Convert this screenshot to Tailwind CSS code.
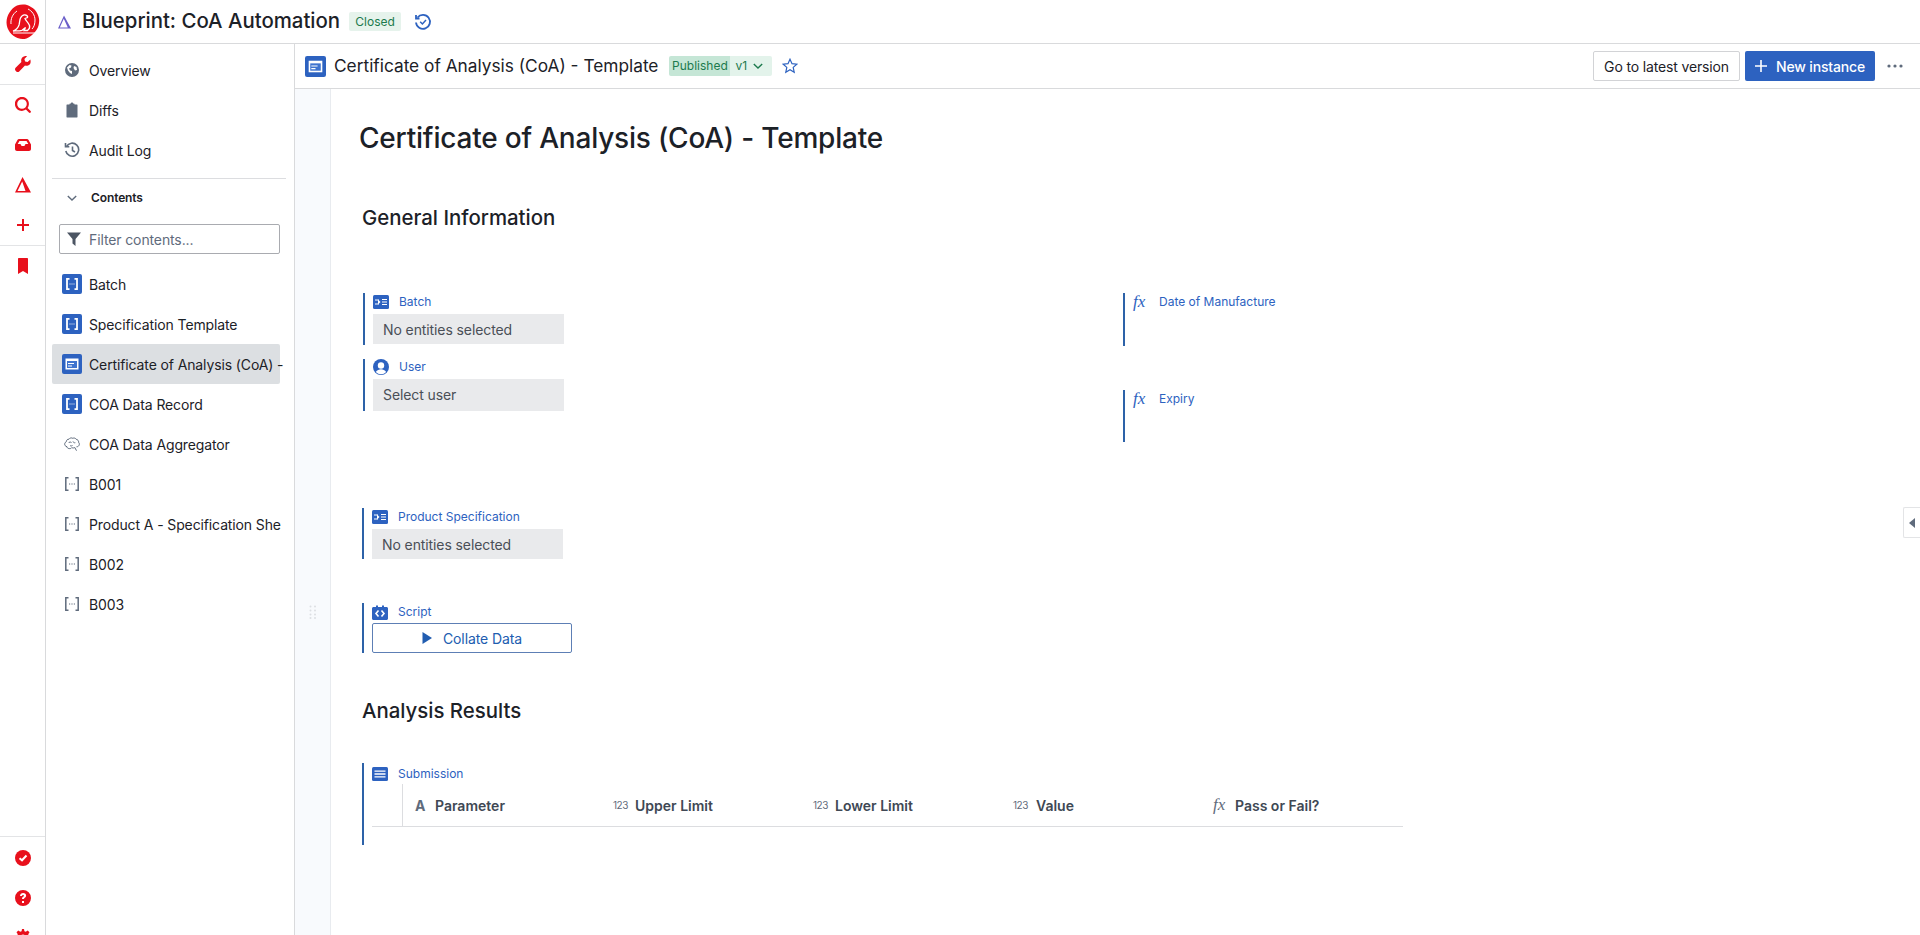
<!DOCTYPE html>
<html lang="en">
<head>
    <meta charset="UTF-8">
    <title>Blueprint: CoA Automation</title>
    <script src="https://cdn.jsdelivr.net/npm/@tailwindcss/browser@4"></script>
</head>
<body class="h-[935px] overflow-hidden bg-white text-[#1c2127] font-['Inter',sans-serif]">
<div class="flex h-[935px]">
    <!-- icon rail -->
    <nav class="w-[46px] shrink-0 flex flex-col border-r border-[#d9dadc] text-[#e8101c]">
        <div class="h-[44px] shrink-0 flex items-center justify-center border-b border-[#d9dadc]">
            <svg width="34" height="36" viewBox="0 0 34 36"><path d="M17 .5c3 0 5 .5 8 2.500 3 1.800 5 3.500 6.500 7 1.500 3.500 2 6 1.500 9-.5 3.500-1.500 6-4 9-2.500 3-5 5-8.500 6.500-3 .8-5.500.8-9-.5-3-1-5.500-3-7.500-5.500C2 25.500.5 22.500.5 18.500c0-4 1-7 3-10C5.500 5 8 3 11 1.500 13 .8 15 .5 17 .5z" fill="#e8101c"/><path d="M22 5c4 2 7 6 7 11 0 4-1 7-3 9M5 20c-.5-5 1.500-10 6-13" fill="none" stroke="#fff" stroke-width="1"/><path d="M7 27c3-1 5-3 6-6 .8-3 .5-5 1.500-7 1-2 3-3.500 5-3 1.500.3 2.500 1.500 2 2.500l-2.500 1c1 2.500 3.500 4 4.500 7 .5 2-.5 4-2 5H18l1.500-3-3.500 2.800c-3 .8-6 .5-9 .7z" fill="none" stroke="#fff" stroke-width="1.300"/><path d="M7 29h22" stroke="#fff" stroke-width="1"/></svg>
        </div>
        <div class="h-[41px] shrink-0 flex items-center justify-center border-b border-[#e3e4e6]">
            <svg width="16" height="16" viewBox="0 0 16 16" fill="currentColor"><path d="M15.300 3.400l-2.700 2.700-2.500-.7-.7-2.500L12 .2C10.500-.3 8.700.1 7.500 1.300 6.200 2.600 5.900 4.400 6.400 6L.6 11.800c-.8.800-.8 2.100 0 2.900l.7.700c.8.800 2.100.8 2.900 0L10 9.600c1.600.5 3.400.1 4.700-1.100 1.200-1.300 1.100-3.500.6-5.100z"/></svg>
        </div>
        <div class="h-[161px] shrink-0 flex flex-col items-center border-b border-[#e3e4e6]">
            <div class="h-[40px] w-full flex items-center justify-center">
                <svg width="16" height="16" viewBox="0 0 16 16" fill="currentColor"><path d="M15.600 13.900l-3-3A7 7 0 1 0 10.900 12.600l3 3c.5.500 1.200.500 1.700 0s.5-1.200 0-1.700zM7 11.800A4.800 4.800 0 1 1 7 2.200a4.800 4.800 0 0 1 0 9.600z"/></svg>
            </div>
            <div class="h-[40px] w-full flex items-center justify-center">
                <svg width="16" height="16" viewBox="0 0 16 16" fill="currentColor"><path d="M4 2h8c.6 0 1.100.3 1.400.8L16 7.500V12c0 1.100-.9 2-2 2H2c-1.100 0-2-.9-2-2V7.500l2.600-4.700C2.900 2.300 3.400 2 4 2zm.5 2L2.700 7H5c.4 0 .7.200.9.500L6.500 9h3l.6-1.500c.2-.3.500-.5.900-.5h2.300l-1.800-3z"/></svg>
            </div>
            <div class="h-[40px] w-full flex items-center justify-center">
                <svg width="16" height="16" viewBox="0 0 16 16" fill="currentColor" fill-rule="evenodd"><path d="M7.500 0L16 15.500H0zM7.200 4.500L2.500 14h8z"/></svg>
            </div>
            <div class="h-[40px] w-full flex items-center justify-center">
                <svg width="12" height="12" viewBox="0 0 12 12" fill="currentColor"><path d="M5 0h2v5h5v2H7v5H5V7H0V5h5z"/></svg>
            </div>
        </div>
        <div class="h-[40px] shrink-0 flex items-center justify-center">
            <svg width="10" height="16" viewBox="0 0 10 16" fill="currentColor"><path d="M1 0h8c.6 0 1 .4 1 1v15l-5-3-5 3V1c0-.6.4-1 1-1z"/></svg>
        </div>
        <div class="mt-auto h-[99px] shrink-0 flex flex-col items-center border-t border-[#e3e4e6] pt-[1px]">
            <div class="h-[40px] w-full shrink-0 flex items-center justify-center">
                <svg width="16" height="16" viewBox="0 0 16 16"><circle cx="8" cy="8" r="8" fill="currentColor"/><path d="M4.500 8.300l2.500 2 4.500-4.800" fill="none" stroke="#fff" stroke-width="2"/></svg>
            </div>
            <div class="h-[40px] w-full shrink-0 flex items-center justify-center">
                <svg width="16" height="16" viewBox="0 0 16 16" fill="currentColor"><path d="M8 0a8 8 0 1 0 0 16A8 8 0 0 0 8 0zm1 13H7v-2h2zm1.800-6.200c-.3.500-.8.900-1.300 1.200-.4.300-.5.500-.5 1H7c0-1.200.5-1.800 1.200-2.200.5-.3.800-.5.800-1 0-.5-.4-.8-1-.8s-1 .4-1.100 1H5c.1-1.800 1.400-3 3.100-3 1.900 0 3 1 3 2.600 0 .5-.1.800-.3 1.200z"/></svg>
            </div>
            <div class="mt-[11px] h-[16px] w-full shrink-0 flex items-start justify-center">
                <svg width="16" height="16" viewBox="0 0 16 16" fill="currentColor"><path d="M7 0h2l.4 2.200 1.400.6L12.700 1.500l1.800 1.800-1.300 1.900.6 1.400L16 7v2l-2.200.4-.6 1.400 1.300 1.900-1.800 1.800-1.900-1.300-1.400.6L9 16H7l-.4-2.200-1.400-.6-1.900 1.300-1.800-1.800 1.300-1.900-.6-1.400L0 9V7l2.200-.4.600-1.400-1.300-1.900 1.800-1.800 1.900 1.300 1.400-.6zM8 5.500a2.500 2.500 0 1 0 0 5 2.500 2.500 0 0 0 0-5z"/></svg>
            </div>
        </div>
    </nav>

    <div class="flex-1 min-w-0 flex flex-col">
        <!-- top bar -->
        <header class="h-[44px] shrink-0 flex items-center border-b border-[#d9dadc] pl-[11px]">
            <svg width="15" height="14" viewBox="0 0 15 14" fill="#6b5fc9" fill-rule="evenodd"><path d="M7 .5L14 13.500H1zM6.800 3.800L2.800 12.400h8z"/></svg>
            <span class="ml-[10px] text-[20.400px] font-medium leading-none">Blueprint: CoA Automation</span>
            <span class="ml-[9px] h-[19px] w-[52px] flex items-center justify-center rounded-[2px] bg-[#e6f3ec] text-[12px] text-[#1c7a4d]">Closed</span>
            <svg class="ml-[13px]" width="18" height="18" viewBox="0 0 18 18" fill="none" stroke="#2d62c0" stroke-width="1.800"><path d="M3.500 4.500A7 7 0 1 1 2 9.500"/><path d="M2 2v3.500h3.500"/><path d="M6.200 8.800l2.200 2.200 3.600-4" stroke-width="1.500"/></svg>
        </header>

        <div class="flex-1 min-h-0 flex">
            <!-- contents sidebar -->
            <aside class="w-[249px] shrink-0 border-r border-[#d9dadc] pl-[6px] text-[14px] tracking-[-0.12px]">
                <div class="pt-[6px]">
                    <div class="h-[40px] flex items-center pl-[12px]">
                        <svg width="16" height="16" viewBox="0 0 16 16" fill="#5f6b7c"><path d="M8 1a7 7 0 1 0 0 14A7 7 0 0 0 8 1zM3 5.500L5.500 3l2 .5-.5 2-2 1 1 2 2 .5v3L6 11 4 8.500zM10 4l2.500 1L13 8l-2 .5L9.500 6z"/></svg>
                        <span class="ml-[9px]">Overview</span>
                    </div>
                    <div class="h-[40px] flex items-center pl-[12px]">
                        <svg width="16" height="16" viewBox="0 0 16 16" fill="#5f6b7c"><path d="M5.500 2.500V2c0-.3.2-.5.500-.5h1V1c0-.3.2-.5.500-.5h1c.3 0 .5.2.500.500v.5h1c.3 0 .5.200.5.500v.5H13c.3 0 .5.200.5.500v12c0 .3-.2.500-.5.500H3c-.3 0-.5-.2-.5-.5V3c0-.3.2-.5.5-.5z"/></svg>
                        <span class="ml-[9px]">Diffs</span>
                    </div>
                    <div class="h-[40px] flex items-center pl-[12px]">
                        <svg width="16" height="16" viewBox="0 0 16 16" fill="none" stroke="#5f6b7c" stroke-width="1.600"><path d="M2.500 4.500A6.500 6.500 0 1 1 1.800 9"/><path d="M1.500 1v3.800h3.800"/><path d="M8.500 4.500V8.500l2.500 1.500"/></svg>
                        <span class="ml-[9px]">Audit Log</span>
                    </div>
                </div>
                <div class="mt-[8px] h-px w-[234px] bg-[#dcdde0]"></div>
                <div class="h-[38px] flex items-center pl-[15px]">
                    <svg width="10" height="10" viewBox="0 0 10 10" fill="none" stroke="#5f6b7c" stroke-width="1.400"><path d="M.8 3l4.200 4 4.200-4"/></svg>
                    <span class="ml-[14px] text-[12px] font-semibold">Contents</span>
                </div>
                <div class="ml-[7px] mt-[7px] w-[221px] h-[30px] flex items-center rounded-[2px] border border-[#a9abb0] pl-[7px]">
                    <svg width="14" height="14" viewBox="0 0 14 14" fill="#4c5563"><path d="M0 .5h14L8.500 7v7L5.500 11.500V7z"/></svg>
                    <span class="ml-[8px] text-[#5f6b7c]">Filter contents...</span>
                </div>
                <ul class="mt-[10px] w-[228px]">
                    <li class="h-[40px] flex items-center pl-[10px]">
                        <svg width="20" height="20" viewBox="0 0 20 20"><rect width="20" height="20" rx="2" fill="#2d62c0"/><path d="M7.500 4.800H5v10.400h2.500M12.500 4.800H15v10.400h-2.500" fill="none" stroke="#fff" stroke-width="1.800"/><path d="M7.500 10h1M9.500 10h1M11.500 10h1" stroke="#fff"/></svg>
                        <span class="ml-[7px] whitespace-nowrap">Batch</span>
                    </li>
                    <li class="h-[40px] flex items-center pl-[10px]">
                        <svg width="20" height="20" viewBox="0 0 20 20"><rect width="20" height="20" rx="2" fill="#2d62c0"/><path d="M7.500 4.800H5v10.400h2.500M12.500 4.800H15v10.400h-2.500" fill="none" stroke="#fff" stroke-width="1.800"/><path d="M7.500 10h1M9.500 10h1M11.500 10h1" stroke="#fff"/></svg>
                        <span class="ml-[7px] whitespace-nowrap">Specification Template</span>
                    </li>
                    <li class="h-[40px] flex items-center pl-[10px] rounded-[2px] bg-[#dcdfe2]">
                        <svg class="shrink-0" width="20" height="20" viewBox="0 0 20 20"><rect width="20" height="20" rx="2" fill="#2d62c0"/><rect x="3.500" y="4.500" width="13" height="11" fill="#fff"/><rect x="5" y="7" width="10" height="7" fill="#3f74cf"/><path d="M6 9.500h6M6 12h4" stroke="#fff"/></svg>
                        <span class="ml-[7px] whitespace-nowrap">Certificate of Analysis (CoA) -</span>
                    </li>
                    <li class="h-[40px] flex items-center pl-[10px]">
                        <svg width="20" height="20" viewBox="0 0 20 20"><rect width="20" height="20" rx="2" fill="#2d62c0"/><path d="M7.500 4.800H5v10.400h2.500M12.500 4.800H15v10.400h-2.500" fill="none" stroke="#fff" stroke-width="1.800"/><path d="M7.500 10h1M9.500 10h1M11.500 10h1" stroke="#fff"/></svg>
                        <span class="ml-[7px] whitespace-nowrap">COA Data Record</span>
                    </li>
                    <li class="h-[40px] flex items-center pl-[10px]">
                        <svg class="mx-[2px]" width="16" height="16" viewBox="0 0 16 16" fill="none" stroke="#5f6b7c"><path d="M5 12.500c-1.200 0-2-.8-2-1.800C1.500 10.400.5 9.200.7 7.800.9 6.800 1.500 6 2.300 5.700 2.300 4.300 3.500 3 5 3.200 5.600 2 7.500 1.500 8.800 2.300c1.200-.6 2.800-.2 3.400 1 1.500.2 2.600 1.500 2.400 3 .6.600.9 1.500.7 2.300-.3 1.400-1.500 2.300-2.800 2.200M5 12.500c1 .4 2.200 0 2.800-.9.900.5 2.100.5 3-.1M10.800 11.500l1.700 3.200M4.500 7c.7-1 2-1.200 3-.5M9 5.500c.3 1 1.300 1.500 2.300 1.200M6 9.500c.8.600 1.800.6 2.500 0"/></svg>
                        <span class="ml-[7px] whitespace-nowrap">COA Data Aggregator</span>
                    </li>
                    <li class="h-[40px] flex items-center pl-[10px]">
                        <svg class="mx-[2px]" width="16" height="16" viewBox="0 0 16 16" fill="none" stroke="#5f6b7c" stroke-width="1.500"><path d="M4.500 1.800H1.800v12.400h2.700M11.500 1.800h2.700v12.400h-2.700"/><path d="M5 8h1.200M7.400 8h1.200M9.800 8h1.200" stroke-width="1"/></svg>
                        <span class="ml-[7px] whitespace-nowrap">B001</span>
                    </li>
                    <li class="h-[40px] flex items-center pl-[10px]">
                        <svg class="mx-[2px] shrink-0" width="16" height="16" viewBox="0 0 16 16" fill="none" stroke="#5f6b7c" stroke-width="1.500"><path d="M4.500 1.800H1.800v12.400h2.700M11.500 1.800h2.700v12.400h-2.700"/><path d="M5 8h1.200M7.400 8h1.200M9.800 8h1.200" stroke-width="1"/></svg>
                        <span class="ml-[7px] whitespace-nowrap">Product A - Specification She</span>
                    </li>
                    <li class="h-[40px] flex items-center pl-[10px]">
                        <svg class="mx-[2px]" width="16" height="16" viewBox="0 0 16 16" fill="none" stroke="#5f6b7c" stroke-width="1.500"><path d="M4.500 1.800H1.800v12.400h2.700M11.500 1.800h2.700v12.400h-2.700"/><path d="M5 8h1.200M7.400 8h1.200M9.800 8h1.200" stroke-width="1"/></svg>
                        <span class="ml-[7px] whitespace-nowrap">B002</span>
                    </li>
                    <li class="h-[40px] flex items-center pl-[10px]">
                        <svg class="mx-[2px]" width="16" height="16" viewBox="0 0 16 16" fill="none" stroke="#5f6b7c" stroke-width="1.500"><path d="M4.500 1.800H1.800v12.400h2.700M11.500 1.800h2.700v12.400h-2.700"/><path d="M5 8h1.200M7.400 8h1.200M9.800 8h1.200" stroke-width="1"/></svg>
                        <span class="ml-[7px] whitespace-nowrap">B003</span>
                    </li>
                </ul>
            </aside>

            <main class="relative flex-1 min-w-0 flex flex-col">
                <!-- document header -->
                <div class="h-[45px] shrink-0 flex items-center border-b border-[#d9dadc] pl-[10px] pr-[17px]">
                    <svg width="21" height="21" viewBox="0 0 20 20"><rect width="20" height="20" rx="2" fill="#2d62c0"/><rect x="3.500" y="4.500" width="13" height="11" fill="#fff"/><rect x="5" y="7" width="10" height="7" fill="#3f74cf"/><path d="M6 9.500h6M6 12h4" stroke="#fff"/></svg>
                    <span class="ml-[8px] text-[17.300px]">Certificate of Analysis (CoA) - Template</span>
                    <div class="ml-[11px] h-[20px] flex items-center rounded-[2px] overflow-hidden text-[12px] text-[#1c7a4d]">
                        <span class="h-full w-[61px] flex items-center justify-center bg-[#c5e6d6]">Published</span>
                        <span class="h-full w-[42px] pl-[5px] flex items-center bg-[#e3f3eb]">v1
                            <svg class="ml-[6px]" width="10" height="10" viewBox="0 0 10 10" fill="none" stroke="#1c7a4d" stroke-width="1.400"><path d="M.8 3l4.200 4 4.200-4"/></svg>
                        </span>
                    </div>
                    <svg class="ml-[10px]" width="16" height="16" viewBox="0 0 16 16" fill="none" stroke="#2d62c0" stroke-width="1.200"><path d="M8 1.200l2 4.500 4.800.5-3.600 3.200 1 4.800L8 11.800l-4.200 2.400 1-4.800L1.200 6.200 6 5.700z"/></svg>
                    <div class="ml-auto flex items-center">
                        <button class="h-[30px] w-[147px] rounded-[2px] border border-[#d2d3d6] text-[14px] tracking-[-0.15px]">Go to latest version</button>
                        <button class="ml-[5px] h-[30px] w-[130px] flex items-center justify-center rounded-[2px] bg-[#2d62c0] text-[14px] font-medium tracking-[-0.15px] text-white">
                            <svg width="12" height="12" viewBox="0 0 12 12" fill="#fff"><path d="M5.200 0h1.600v5.200H12v1.600H6.800V12H5.200V6.800H0V5.200h5.200z"/></svg>
                            <span class="ml-[9px]">New instance</span>
                        </button>
                        <svg class="ml-[12px]" width="16" height="16" viewBox="0 0 16 16" fill="#5f6b7c"><circle cx="2" cy="8" r="1.600"/><circle cx="8" cy="8" r="1.600"/><circle cx="14" cy="8" r="1.600"/></svg>
                    </div>
                </div>

                <div class="flex-1 min-h-0 flex">
                    <!-- gutter -->
                    <div class="w-[36px] shrink-0 flex flex-col items-center bg-[#f8fafd] border-r border-[#e8ebef] pt-[516px]">
                        <svg width="8" height="14" viewBox="0 0 8 14" fill="#dcdfe3"><circle cx="1.500" cy="1.500" r="1"/><circle cx="6" cy="1.500" r="1"/><circle cx="1.500" cy="5.500" r="1"/><circle cx="6" cy="5.500" r="1"/><circle cx="1.500" cy="9.500" r="1"/><circle cx="6" cy="9.500" r="1"/><circle cx="1.500" cy="13" r="1"/><circle cx="6" cy="13" r="1"/></svg>
                    </div>

                    <!-- document body -->
                    <div class="flex-1 min-w-0 pl-[28px] pt-[32px]">
                        <h1 class="h-[35px] text-[28px] leading-[35px] font-medium tracking-[-0.2px]">Certificate of Analysis (CoA) - Template</h1>
                        <h2 class="ml-[3px] mt-[50px] h-[24px] text-[20.400px] leading-[24px] font-medium">General Information</h2>

                        <div class="ml-[4px] mt-[63px] flex h-[215px]">
                            <div class="w-[760px]">
                                <div class="mb-[14px] h-[52px] pl-[8px] border-l-[2px] border-[#2d62a8]">
                                    <div class="h-[21px] pb-[4px] flex items-center text-[12px] text-[#2d62c0]">
                                        <svg width="16" height="14" viewBox="0 0 16 14"><rect width="16" height="14" rx="1.500" fill="#2d62c0"/><path d="M2 5h4M2 9h4M9 4.500h5M9 7h5M9 9.500h5" stroke="#fff" stroke-width="1.200"/><path d="M5 4.500L7.500 7 5 9.500z" fill="#fff"/></svg>
                                        <span class="ml-[10px]">Batch</span>
                                    </div>
                                    <div class="h-[30px] w-[191px] pl-[10px] flex items-center bg-[#e9eaec] text-[14px] tracking-[-0.1px] text-[#4a4f57]">No entities selected</div>
                                </div>
                                <div class="h-[52px] pl-[8px] border-l-[2px] border-[#2d62a8]">
                                    <div class="h-[20px] pb-[4px] flex items-center text-[12px] text-[#2d62c0]">
                                        <svg width="16" height="16" viewBox="0 0 16 16"><circle cx="8" cy="8" r="8" fill="#2d62c0"/><circle cx="8" cy="6.500" r="3.200" fill="#fff"/><path d="M2.800 13c1.300-2 3.200-2.800 5.200-2.800s3.900.8 5.200 2.800a7 7 0 0 1-10.400 0z" fill="#fff"/></svg>
                                        <span class="ml-[10px]">User</span>
                                    </div>
                                    <div class="h-[32px] w-[191px] pl-[10px] pb-[1px] flex items-center bg-[#e9eaec] text-[14px] tracking-[-0.1px] text-[#4a4f57]">Select user</div>
                                </div>
                            </div>
                            <div>
                                <div class="mb-[44px] h-[53px] pl-[8px] border-l-[2px] border-[#2d62a8]">
                                    <div class="h-[21px] pb-[4px] flex items-center text-[12px] text-[#2d62c0]">
                                        <span class="w-[16px] font-['Liberation_Serif',serif] italic font-medium text-[17px]">fx</span>
                                        <span class="ml-[10px]">Date of Manufacture</span>
                                    </div>
                                </div>
                                <div class="h-[52px] pl-[8px] border-l-[2px] border-[#2d62a8]">
                                    <div class="h-[21px] pb-[4px] flex items-center text-[12px] text-[#2d62c0]">
                                        <span class="w-[16px] font-['Liberation_Serif',serif] italic font-medium text-[17px]">fx</span>
                                        <span class="ml-[10px]">Expiry</span>
                                    </div>
                                </div>
                            </div>
                        </div>

                        <div class="ml-[3px] h-[51px] w-[210px] pl-[8px] border-l-[2px] border-[#2d62a8]">
                            <div class="h-[21px] pb-[3px] flex items-center text-[12px] text-[#2d62c0]">
                                <svg width="16" height="14" viewBox="0 0 16 14"><rect width="16" height="14" rx="1.500" fill="#2d62c0"/><path d="M2 5h4M2 9h4M9 4.500h5M9 7h5M9 9.500h5" stroke="#fff" stroke-width="1.200"/><path d="M5 4.500L7.500 7 5 9.500z" fill="#fff"/></svg>
                                <span class="ml-[10px]">Product Specification</span>
                            </div>
                            <div class="h-[30px] w-[191px] pl-[10px] flex items-center bg-[#e9eaec] text-[14px] tracking-[-0.1px] text-[#4a4f57]">No entities selected</div>
                        </div>

                        <div class="ml-[3px] mt-[44px] h-[50px] w-[210px] pl-[8px] border-l-[2px] border-[#2d62a8]">
                            <div class="h-[20px] pb-[2px] flex items-center text-[12px] text-[#2d62c0]">
                                <svg width="16" height="15" viewBox="0 0 16 15"><path d="M1.500 2H4V.5h2V2h4V.5h2V2h2.500c.8 0 1.500.7 1.500 1.500v10c0 .8-.7 1.500-1.500 1.500h-13C.7 15 0 14.300 0 13.500v-10C0 2.700.7 2 1.500 2z" fill="#2d62c0"/><path d="M6.500 5.500L4 8.500l2.500 3M9.500 5.500l2.500 3-2.500 3" fill="none" stroke="#fff" stroke-width="1.600"/></svg>
                                <span class="ml-[10px]">Script</span>
                            </div>
                            <button class="h-[30px] w-[200px] flex items-center justify-center rounded-[2px] border border-[#5d7fb5] text-[14px] tracking-[-0.1px] text-[#215db0]">
                                <svg width="10" height="12" viewBox="0 0 10 12" fill="#215db0"><path d="M.5 0L10 6 .5 12z"/></svg>
                                <span class="ml-[11px]">Collate Data</span>
                            </button>
                        </div>

                        <h2 class="ml-[3px] mt-[46px] h-[24px] text-[20.400px] leading-[24px] font-medium">Analysis Results</h2>

                        <div class="ml-[3px] mt-[40px] h-[82px] w-[1040px] pl-[8px] border-l-[2px] border-[#2d62a8]">
                            <div class="h-[21px] flex items-center text-[12px] text-[#2d62c0]">
                                <svg width="16" height="14" viewBox="0 0 16 14"><rect width="16" height="14" rx="1.500" fill="#2d62c0"/><path d="M2.500 4.200h11M2.500 7h11M2.500 9.800h11" stroke="#fff" stroke-width="1.300"/></svg>
                                <span class="ml-[10px]">Submission</span>
                            </div>
                            <div class="w-[1031px] h-[43px] flex border-b border-[#dcdde0] text-[14px] font-semibold text-[#404854]">
                                <div class="ml-[30px] w-[200px] flex items-center border-l border-[#dcdde0] pl-[12px]">
                                    <span class="w-[20px] text-[14px] font-bold text-[#5f6b7c]">A</span>
                                    <span>Parameter</span>
                                </div>
                                <div class="w-[200px] flex items-center pl-[11px]">
                                    <span class="w-[22px] text-[10px] font-normal tracking-[-0.5px] text-[#5f6b7c]">123</span>
                                    <span>Upper Limit</span>
                                </div>
                                <div class="w-[200px] flex items-center pl-[11px]">
                                    <span class="w-[22px] text-[10px] font-normal tracking-[-0.5px] text-[#5f6b7c]">123</span>
                                    <span>Lower Limit</span>
                                </div>
                                <div class="w-[200px] flex items-center pl-[11px]">
                                    <span class="w-[23px] text-[10px] font-normal tracking-[-0.5px] text-[#5f6b7c]">123</span>
                                    <span>Value</span>
                                </div>
                                <div class="w-[200px] flex items-center pl-[11px]">
                                    <span class="w-[22px] font-['Liberation_Serif',serif] italic font-normal text-[17px] text-[#5f6b7c]">fx</span>
                                    <span>Pass or Fail?</span>
                                </div>
                            </div>
                        </div>
                    </div>
                </div>

                <!-- collapsed right panel tab -->
                <div class="absolute right-0 top-[463px] h-[31px] w-[17px] flex items-center justify-center rounded-l-[2px] border border-r-0 border-[#e3e4e6] bg-white">
                    <svg width="6" height="10" viewBox="0 0 6 10" fill="#5f6b7c"><path d="M6 0v10L0 5z"/></svg>
                </div>
            </main>
        </div>
    </div>
</div>
</body>
</html>
